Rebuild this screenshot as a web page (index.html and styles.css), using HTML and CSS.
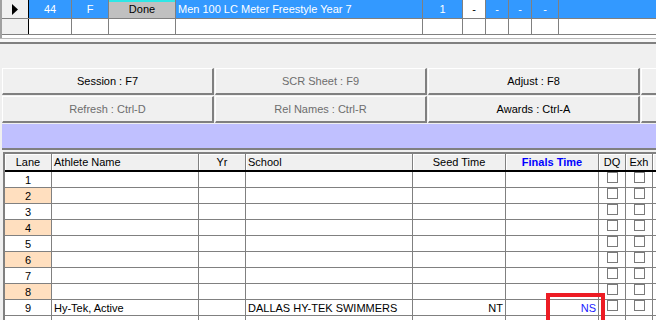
FILE: index.html
```html
<!DOCTYPE html>
<html>
<head>
<meta charset="utf-8">
<link rel="stylesheet" href="styles.css">
</head>
<body>
<div class="app">
  <div class="topgrid">
    <div class="trow sel">
      <div class="c ind"><svg width="7" height="11" viewBox="0 0 7 11"><polygon points="0,0 6,5.5 0,11" fill="#000"/></svg></div>
      <div class="c w43 ctr">44</div>
      <div class="c w37 ctr">F</div>
      <div class="c w67 ctr done">Done</div>
      <div class="c w247 ev">Men 100 LC Meter Freestyle Year 7</div>
      <div class="c w40 ctr">1</div>
      <div class="c w23 ctr wcell">-</div>
      <div class="c w23 ctr">-</div>
      <div class="c w23 ctr">-</div>
      <div class="c w27 ctr">-</div>
      <div class="c rest"></div>
    </div>
    <div class="trow">
      <div class="c ind"></div>
      <div class="c w43"></div>
      <div class="c w37"></div>
      <div class="c w67"></div>
      <div class="c w247"></div>
      <div class="c w40"></div>
      <div class="c w23"></div>
      <div class="c w23"></div>
      <div class="c w23"></div>
      <div class="c w27"></div>
      <div class="c rest nob"></div>
    </div>
  </div>
  <div class="sep"></div>

  <div class="panel">
    <div class="btnrow">
      <div class="btn">Session : F7</div>
      <div class="btn dis">SCR Sheet : F9</div>
      <div class="btn">Adjust : F8</div>
      <div class="btn"></div>
    </div>
    <div class="btnrow">
      <div class="btn dis">Refresh : Ctrl-D</div>
      <div class="btn dis">Rel Names : Ctrl-R</div>
      <div class="btn">Awards : Ctrl-A</div>
      <div class="btn"></div>
    </div>
    <div class="band"></div>

    <div class="tbl">
      <div class="hrow">
        <div class="hc lane">Lane</div>
        <div class="hc name left">Athlete Name</div>
        <div class="hc yr">Yr</div>
        <div class="hc school left">School</div>
        <div class="hc seed">Seed Time</div>
        <div class="hc finals fin">Finals Time</div>
        <div class="hc chk">DQ</div>
        <div class="hc chk">Exh</div>
        <div class="hc more"></div>
      </div>
      <div class="row"><div class="cell lane">1</div><div class="cell name"></div><div class="cell yr"></div><div class="cell school"></div><div class="cell seed"></div><div class="cell finals"></div><div class="cell chk"><span class="box"></span></div><div class="cell chk"><span class="box"></span></div><div class="cell more"></div></div>
      <div class="row"><div class="cell lane alt">2</div><div class="cell name"></div><div class="cell yr"></div><div class="cell school"></div><div class="cell seed"></div><div class="cell finals"></div><div class="cell chk"><span class="box"></span></div><div class="cell chk"><span class="box"></span></div><div class="cell more"></div></div>
      <div class="row"><div class="cell lane">3</div><div class="cell name"></div><div class="cell yr"></div><div class="cell school"></div><div class="cell seed"></div><div class="cell finals"></div><div class="cell chk"><span class="box"></span></div><div class="cell chk"><span class="box"></span></div><div class="cell more"></div></div>
      <div class="row"><div class="cell lane alt">4</div><div class="cell name"></div><div class="cell yr"></div><div class="cell school"></div><div class="cell seed"></div><div class="cell finals"></div><div class="cell chk"><span class="box"></span></div><div class="cell chk"><span class="box"></span></div><div class="cell more"></div></div>
      <div class="row"><div class="cell lane">5</div><div class="cell name"></div><div class="cell yr"></div><div class="cell school"></div><div class="cell seed"></div><div class="cell finals"></div><div class="cell chk"><span class="box"></span></div><div class="cell chk"><span class="box"></span></div><div class="cell more"></div></div>
      <div class="row"><div class="cell lane alt">6</div><div class="cell name"></div><div class="cell yr"></div><div class="cell school"></div><div class="cell seed"></div><div class="cell finals"></div><div class="cell chk"><span class="box"></span></div><div class="cell chk"><span class="box"></span></div><div class="cell more"></div></div>
      <div class="row"><div class="cell lane">7</div><div class="cell name"></div><div class="cell yr"></div><div class="cell school"></div><div class="cell seed"></div><div class="cell finals"></div><div class="cell chk"><span class="box"></span></div><div class="cell chk"><span class="box"></span></div><div class="cell more"></div></div>
      <div class="row"><div class="cell lane alt">8</div><div class="cell name"></div><div class="cell yr"></div><div class="cell school"></div><div class="cell seed"></div><div class="cell finals"></div><div class="cell chk"><span class="box"></span></div><div class="cell chk"><span class="box"></span></div><div class="cell more"></div></div>
      <div class="row"><div class="cell lane">9</div><div class="cell name left">Hy-Tek, Active</div><div class="cell yr"></div><div class="cell school left">DALLAS HY-TEK SWIMMERS</div><div class="cell seed right">NT</div><div class="cell finals right ns">NS</div><div class="cell chk"><span class="box"></span></div><div class="cell chk"><span class="box"></span></div><div class="cell more"></div></div>
      <div class="row"><div class="cell lane"></div><div class="cell name"></div><div class="cell yr"></div><div class="cell school"></div><div class="cell seed"></div><div class="cell finals"></div><div class="cell chk"></div><div class="cell chk"></div><div class="cell more"></div></div>
    </div>
  </div>
  <div class="highlight"></div>
</div>
</body>
</html>
```

FILE: styles.css
```css
* { box-sizing: border-box; }
html, body { margin: 0; padding: 0; }
body {
  width: 656px;
  height: 320px;
  overflow: hidden;
  background: #f0f0f0;
  font-family: "Liberation Sans", Arial, sans-serif;
  font-size: 11px;
  color: #000;
}
.app { position: relative; width: 656px; height: 320px; overflow: hidden; }

/* top grid */
.topgrid {
  height: 38px;
  background: #fff;
  border-left: 2px solid #a0a0a0;
}
.trow { display: flex; height: 19px; border-bottom: 1px solid #808080; }
.trow + .trow { height: 16px; }
.trow.sel { background: #3399ff; color: #fff; }
.c {
  flex: none;
  border-right: 1px solid #808080;
  display: flex;
  align-items: center;
  white-space: nowrap;
  overflow: hidden;
}
.ctr { justify-content: center; }
.ind { width: 27px; background: #f0f0f0; border-right-color: #000; justify-content: center; }
.w43 { width: 43px; }
.w37 { width: 37px; }
.w67 { width: 67px; }
.w247 { width: 247px; }
.w40 { width: 40px; }
.w23 { width: 23px; }
.w27 { width: 27px; }
.rest { flex: 1; border-right: none; }
.ev { padding-left: 2px; }
.done { background: #c0c0c0; color: #000; box-shadow: inset 0 2px 0 #2ee6e6; }
.wcell { background: #fff; color: #000; }

.sep {
  height: 6px;
  border-top: 1px solid #b8b8b8;
  border-bottom: 2px solid #808080;
  background: #f8f8f8;
}

/* panel */
.panel { padding: 24px 0 0 2px; }
.btnrow { display: flex; gap: 1px; margin-bottom: 1px; }
.btn {
  flex: none;
  width: 212px;
  height: 27px;
  border-top: 1px solid #fff;
  border-left: 1px solid #fff;
  border-right: 2px solid #808080;
  border-bottom: 2px solid #808080;
  display: flex;
  align-items: center;
  justify-content: center;
  color: #000;
}
.btn.dis { color: #6d6d6d; }
.band {
  margin-top: 1px;
  height: 26px;
  background: #c0c0ff;
  border-bottom: 2px solid #808080;
}

/* table */
.tbl {
  margin: 2px 0 0 1px;
  width: 700px;
  border-top: 2px solid #808080;
  border-left: 2px solid #808080;
  background: #fff;
}
.hrow { display: flex; height: 18px; border-bottom: 2px solid #000; background: #f0f0f0; }
.row { display: flex; height: 16px; border-bottom: 1px solid #808080; }
.hc, .cell {
  flex: none;
  border-right: 1px solid #808080;
  display: flex;
  align-items: center;
  justify-content: center;
  white-space: nowrap;
  overflow: hidden;
}
.hc { box-shadow: inset 1px 1px 0 #fff; }
.cell { align-items: center; }
.lane { width: 47px; }
.name { width: 147px; }
.yr { width: 47px; }
.school { width: 167px; }
.seed { width: 93px; }
.finals { width: 93px; }
.chk { width: 27px; }
.more { flex: 1; }
.left { justify-content: flex-start; padding-left: 2px; }
.right { justify-content: flex-end; padding-right: 2px; }
.fin { color: #0000ff; font-weight: bold; }
.ns { color: #1a1aff; }
.alt { background: #ffdfbf; }
.cell.chk { align-items: flex-start; }
.box {
  display: block;
  width: 11px;
  height: 11px;
  border: 1px solid #7a7a7a;
  background: #fff;
}

.highlight {
  position: absolute;
  left: 546px;
  top: 293px;
  width: 59px;
  height: 40px;
  border: 4px solid #ed1c24;
}
```
